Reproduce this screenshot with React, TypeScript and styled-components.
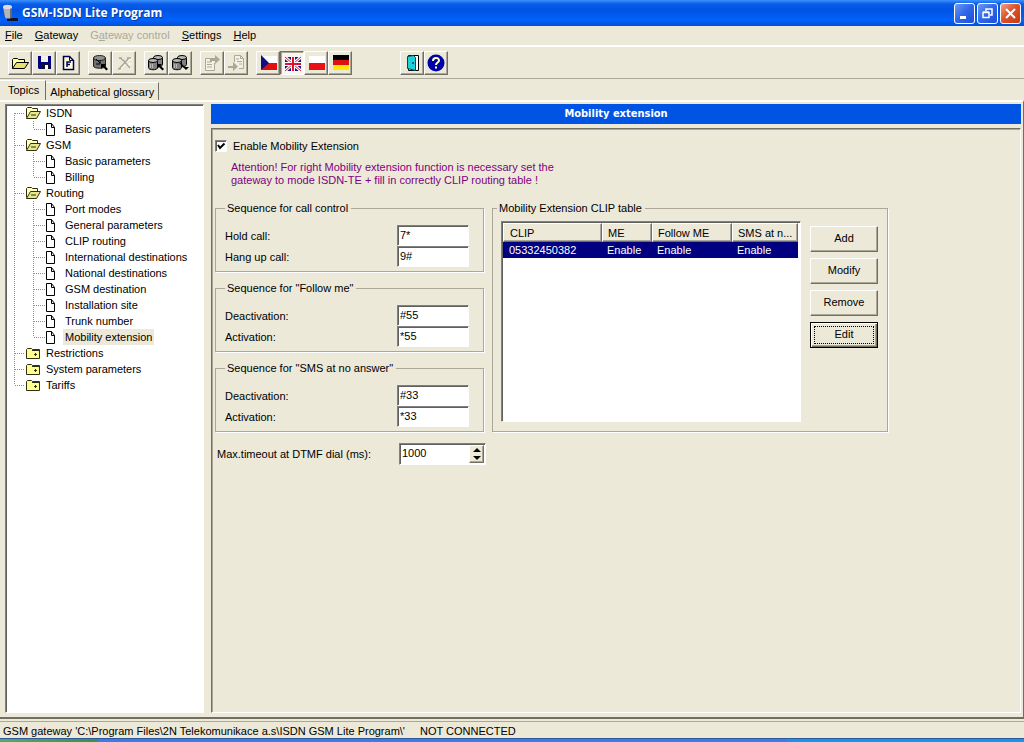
import React, { useState } from "react";
import styled, { createGlobalStyle, css } from "styled-components";

const face = "#ece9d8";
const shadow = "#aca899";
const dark = "#716f64";
const light = "#ffffff";
const sans = '"Liberation Sans", Arial, sans-serif';

const GlobalStyle = createGlobalStyle`
  * { box-sizing: border-box; }
  body { margin: 0; background: ${face}; color: #000; font: 11px/16px ${sans}; }
  button, input { font: inherit; color: inherit; }
  button { padding: 0; margin: 0; border: 0; background: none; }
  svg { display: block; flex: none; }
`;

const sunken = css`
  border: 1px solid;
  border-color: #808080 ${light} ${light} #808080;
  box-shadow: inset 1px 1px 0 #606060;
`;

const raised = css`
  border: 1px solid;
  border-color: ${light} ${dark} ${dark} ${light};
  box-shadow: inset -1px -1px 0 ${shadow};
`;

const Window = styled.div`
  display: flex;
  flex-direction: column;
  min-height: 100vh;
`;

const TitleBar = styled.header`
  display: flex;
  align-items: center;
  gap: 4px;
  height: 26px;
  padding: 0 3px 0 2px;
  background: linear-gradient(#3c94fc 0, #0a5be8 4px, #0054e3 10px, #0262fb 20px, #0150d8 26px);
`;

const Title = styled.h1`
  flex: 1;
  margin: 0;
  color: #fff;
  font: bold 12px/20px "Open Sans", "Noto Sans", sans-serif;
  text-shadow: 1px 1px 0 #0a3a9c;
`;

const Caption = styled.div`
  display: flex;
  gap: 2px;
`;

const CaptionButton = styled.button<{ $close?: boolean }>`
  display: grid;
  place-items: center;
  width: 21px;
  height: 21px;
  border: 1px solid #fff;
  border-radius: 3px;
  background: ${(p) =>
    p.$close
      ? "linear-gradient(135deg, #f0a088, #e0532a 45%, #c43a10)"
      : "linear-gradient(135deg, #6d9af4, #2f66e8 50%, #1c4fd8)"};
`;

const MenuBar = styled.nav`
  display: flex;
  gap: 12px;
  height: 21px;
  padding: 1px 5px 2px;
  border-bottom: 2px solid #fff;
`;

const MenuItem = styled.button`
  line-height: 16px;
  &:disabled { color: ${shadow}; }
`;

const Toolbar = styled.div`
  display: flex;
  gap: 8px;
  padding: 4px 8px 3px;
  border-bottom: 1px solid ${shadow};
`;

const ToolGroup = styled.div<{ $apart?: boolean }>`
  display: flex;
  margin-left: ${(p) => (p.$apart ? 40 : 0)}px;
`;

const ToolButton = styled.button<{ $pressed?: boolean }>`
  display: grid;
  place-items: center;
  width: 24px;
  height: 24px;
  ${raised}
  ${(p) =>
    p.$pressed &&
    css`
      border-color: ${dark} ${light} ${light} ${dark};
      box-shadow: inset 1px 1px 0 ${shadow};
      background: #f7f5ee;
    `}
`;

const Tabs = styled.div`
  display: flex;
  align-items: flex-end;
  height: 20px;
  margin-top: 1px;
`;

const Tab = styled.button<{ $active?: boolean }>`
  height: ${(p) => (p.$active ? 20 : 18)}px;
  padding: ${(p) => (p.$active ? "0 6px 1px 8px" : "0 4px")};
  border-right: 1px solid ${dark};
  border-top: 1px solid #fff;
`;

const Page = styled.main`
  flex: 1;
  display: flex;
  gap: 7px;
  padding: 2px 2px 4px 5px;
  border-top: 2px solid #fbfaf4;
  border-right: 1px solid ${dark};
  border-bottom: 2px solid ${dark};
`;

const Tree = styled.ul`
  flex: none;
  width: 199px;
  margin: 0;
  padding: 0;
  list-style: none;
  background: #fff;
  ${sunken}
`;

const TreeRow = styled.li`
  display: flex;
  height: 16px;
`;

const TreeLabel = styled.button<{ $selected?: boolean; $leaf?: boolean }>`
  height: 16px;
  padding: 0 2px;
  margin-left: ${(p) => (p.$leaf ? 6 : 2)}px;
  line-height: 16px;
  background: ${(p) => (p.$selected ? face : "none")};
`;

const Content = styled.section`
  flex: 1;
  min-width: 0;
  display: flex;
  flex-direction: column;
  gap: 4px;
`;

const Heading = styled.h2`
  margin: 0;
  background: #0054e3;
  color: #fff;
  text-align: center;
  font: bold 11px/20px "DejaVu Sans Condensed", "DejaVu Sans", sans-serif;
`;

const Panel = styled.div`
  flex: 1;
  padding: 8px 3px;
  border: 1px solid;
  border-color: ${dark} #fff #fff ${dark};
  box-shadow: inset 1px 1px 0 ${shadow};
`;

const CheckLabel = styled.label`
  display: flex;
  align-items: center;
  gap: 6px;
  height: 17px;
`;

const CheckBox = styled.span`
  display: grid;
  > * { grid-area: 1 / 1; }
  input {
    appearance: none;
    width: 12px;
    height: 12px;
    margin: 0;
    background: #fff;
    ${sunken}
  }
  svg { pointer-events: none; }
  input:not(:checked) + svg { visibility: hidden; }
`;

const Notice = styled.p`
  margin: 7px 0 13px 16px;
  color: #800080;
  line-height: 13px;
`;

const Columns = styled.div`
  display: flex;
  align-items: flex-start;
  gap: 8px;
`;

const Sequences = styled.div`
  display: flex;
  flex-direction: column;
  gap: 8px;
  width: 269px;
`;

const Group = styled.fieldset`
  min-width: 0;
  margin: 0;
  padding: 0 14px 4px 9px;
  border: 1px solid ${shadow};
  box-shadow: 1px 1px 0 #fff;
`;

const Legend = styled.legend`
  padding: 0 3px 0 2px;
  line-height: 16px;
`;

const Fields = styled.div`
  padding-top: 9px;
`;

const Field = styled.label`
  display: flex;
  align-items: center;
  justify-content: space-between;
  height: 21px;
`;

const TextBox = styled.input`
  width: 72px;
  height: 21px;
  padding: 0 2px 2px;
  outline: none;
  background: #fff;
  ${sunken}
`;

const TableGroup = styled(Group)`
  flex: none;
  width: 396px;
  padding: 5px 8px 9px 4px;
`;

const TableArea = styled.div`
  display: flex;
  gap: 9px;
  padding-left: 4px;
`;

const ListBox = styled.div`
  width: 300px;
  height: 201px;
  padding: 1px 2px 1px 1px;
  background: #fff;
  ${sunken}
`;

const Table = styled.table`
  width: 100%;
  table-layout: fixed;
  border-collapse: separate;
  border-spacing: 0;
  th {
    height: 19px;
    padding: 0 6px;
    background: ${face};
    text-align: left;
    font-weight: normal;
    white-space: nowrap;
    ${raised}
  }
  th + th { padding: 0 5px; }
  td {
    height: 16px;
    padding: 1px 5px 0;
    background: #000080;
    color: #fff;
    line-height: 15px;
  }
  td:first-child { padding-left: 6px; }
`;

const Actions = styled.div`
  display: flex;
  flex-direction: column;
  gap: 6px;
  padding-top: 5px;
`;

const ActionButton = styled.button<{ $default?: boolean }>`
  width: 68px;
  height: 26px;
  padding-bottom: 2px;
  ${raised}
  ${(p) =>
    p.$default &&
    css`
      border-color: #000;
      box-shadow: inset 1px 1px 0 #fff, inset -1px -1px 0 ${dark}, inset -2px -2px 0 ${shadow};
      outline: 1px dotted #000;
      outline-offset: -5px;
    `}
`;

const Timeout = styled.div`
  display: flex;
  align-items: center;
  justify-content: space-between;
  width: 271px;
  margin-top: 11px;
  padding-left: 2px;
`;

const Spinner = styled.div`
  display: flex;
  width: 87px;
  height: 22px;
  padding: 1px;
  background: #fff;
  ${sunken}
  input {
    flex: 1;
    min-width: 0;
    padding: 0 1px 2px;
    border: 0;
    outline: none;
    background: none;
    appearance: textfield;
  }
  input::-webkit-inner-spin-button { display: none; }
`;

const SpinButtons = styled.div`
  display: flex;
  flex-direction: column;
  width: 15px;
  background: ${face};
  ${raised}
  button { flex: 1; display: grid; place-items: center; min-height: 0; }
`;

const StatusBar = styled.footer`
  display: flex;
  gap: 15px;
  height: 17px;
  margin-top: 2px;
  padding: 1px 3px 0;
  border-top: 1px solid ${shadow};
  line-height: 16px;
  white-space: nowrap;
`;

const Taskbar = styled.div`
  display: flex;
  height: 4px;
  border-top: 1px solid #2a5a9c;
`;

const TaskPart = styled.div<{ $share: number; $color: string }>`
  flex: ${(p) => p.$share};
  background: ${(p) => p.$color};
`;

const Icon = ({ size = 18, children }: { size?: number; children: React.ReactNode }) => (
  <svg width={size} height={size} viewBox={`0 0 ${size} ${size}`} fill="none" aria-hidden="true">
    {children}
  </svg>
);

const Cylinder = ({ x, y }: { x: number; y: number }) => (
  <g transform={`translate(${x} ${y})`} stroke="#000">
    <path d="M.5 2.5v7c0 3 9 3 9 0v-7" fill="#808080" />
    <ellipse cx="5" cy="2.5" rx="4.5" ry="2" fill="#b8b8b8" />
    <path d="M2.500 6v4M4.500 6v4" stroke="#b8b8b8" />
  </g>
);

const icons = {
  open: (
    <Icon>
      <path d="M1.500 14.500v-9l1-1h4l1 1h6v3" fill="#ffffa0" stroke="#000" />
      <path d="M1.500 14.500l4-6h12l-4 6z" fill="#e8e070" stroke="#000" />
    </Icon>
  ),
  save: (
    <Icon>
      <path d="M3 2h13v13H4l-1-1z" fill="#000080" />
      <path d="M6 2h7v6H6z" fill="#f4f2e8" />
      <path d="M6 10h8v5H6z" fill="#101030" />
      <path d="M10 11h3v4h-3z" fill="#fff" />
    </Icon>
  ),
  report: (
    <Icon>
      <path d="M4.500 2.500h6l4 4v9h-10z" fill="#ffffd8" stroke="#000050" strokeWidth="1.500" />
      <path d="M10.500 2.500v4h4" stroke="#000050" />
      <path d="M8 13V8h4M8 10.500h3" stroke="#000050" strokeWidth="1.500" />
    </Icon>
  ),
  connect: (
    <Icon>
      <path d="M2.500 4v8c0 3 12 3 12 0V4" fill="#707070" stroke="#202020" />
      <ellipse cx="8.500" cy="4" rx="6" ry="2.500" fill="#909090" stroke="#202020" />
      <path d="M5 5l4 4M9 6v4H5" stroke="#000" />
      <path d="M10 10h5l-1.500 1.500 3.500 3.500-1.500 1.500-3.500-3.500L10 15z" fill="#000" />
    </Icon>
  ),
  cut: (
    <Icon>
      <path d="M4 15L14 4M4 4c5 1 7 6 11 10M4 4h3M12 4h4M3 15h3M12 9h4" stroke="#fff" transform="translate(1 1)" />
      <path d="M4 15L14 4M4 4c5 1 7 6 11 10M4 4h3M12 4h4M3 15h3" stroke={shadow} strokeWidth="1.500" />
    </Icon>
  ),
  read: (
    <Icon>
      <Cylinder x={6} y={1} />
      <Cylinder x={1} y={4} />
      <path d="M10 10h5l-1.500 1.500 3.500 3.500-1.500 1.500-3.500-3.500L10 15z" fill="#000" />
    </Icon>
  ),
  write: (
    <Icon>
      <Cylinder x={6} y={1} />
      <Cylinder x={1} y={4} />
      <path d="M9 9l4 4" stroke="#000" strokeWidth="1.500" />
      <path d="M12 13h6l-3 3z" fill="#000" />
    </Icon>
  ),
  exportDoc: (
    <Icon>
      <path d="M8 4.500H2.500v12h9V9" stroke={shadow} fill="#f4f1e4" />
      <path d="M4 8h4M4 10.500h5M4 13h5" stroke={shadow} />
      <path d="M7 8V4h5V1l5 4.500-5 4.500V7H9v1z" fill={shadow} />
    </Icon>
  ),
  importDoc: (
    <Icon>
      <path d="M7.500 8V1.500h6l3 3v10H12" stroke={shadow} fill="#f4f1e4" />
      <path d="M13.500 1.500v3h3M9 5h3M10 7.500h5M12 10h3" stroke={shadow} />
      <path d="M1 12h5V8l5 4.500L6 17v-3H1z" fill={shadow} />
    </Icon>
  ),
  czech: (
    <Icon>
      <path d="M2 2h16v7H2z" fill="#fff" />
      <path d="M2 9h16v7H2z" fill="#e01010" />
      <path d="M2 1l8 8-8 7z" fill="#101080" />
    </Icon>
  ),
  british: (
    <Icon>
      <path d="M2 3h16v14H2z" fill="#181878" />
      <path d="M2 3l16 14M18 3L2 17" stroke="#fff" strokeWidth="3" />
      <path d="M2 3l16 14M18 3L2 17" stroke="#e01030" />
      <path d="M10 3v14M2 10h16" stroke="#fff" strokeWidth="4" />
      <path d="M10 3v14M2 10h16" stroke="#e01030" strokeWidth="2" />
    </Icon>
  ),
  polish: (
    <Icon>
      <path d="M2 2h16v7H2z" fill="#fff" />
      <path d="M2 9h16v7H2z" fill="#e81010" />
    </Icon>
  ),
  german: (
    <Icon>
      <path d="M2 1h16v5H2z" fill="#000" />
      <path d="M2 6h16v5H2z" fill="#e01010" />
      <path d="M2 11h16v5H2z" fill="#ffe800" />
    </Icon>
  ),
  exit: (
    <Icon>
      <path d="M5.500 1.500h10v15h-10z" fill="#fff" stroke="#000" />
      <path d="M4.500 2.500l6-1 2 2v13l-8-2z" fill="#20d0d8" stroke="#004850" />
      <path d="M10 8v2" stroke="#000" />
    </Icon>
  ),
  help: (
    <Icon>
      <circle cx="9" cy="9" r="8.500" fill="#0000a8" />
      <path d="M6 7c0-4 6-4 6-.5 0 2-3 2-3 4.500M9 12.500v2" stroke="#ffffd0" strokeWidth="2" />
    </Icon>
  ),
};

type Tool = { icon: keyof typeof icons; label: string; disabled?: boolean; pressed?: boolean };

const toolGroups: Tool[][] = [
  [
    { icon: "open", label: "Open" },
    { icon: "save", label: "Save" },
    { icon: "report", label: "Report" },
  ],
  [
    { icon: "connect", label: "Connect" },
    { icon: "cut", label: "Disconnect", disabled: true },
  ],
  [
    { icon: "read", label: "Read from gateway" },
    { icon: "write", label: "Write to gateway" },
  ],
  [
    { icon: "exportDoc", label: "Export", disabled: true },
    { icon: "importDoc", label: "Import", disabled: true },
  ],
  [
    { icon: "czech", label: "Czech" },
    { icon: "british", label: "English", pressed: true },
    { icon: "polish", label: "Polish" },
    { icon: "german", label: "German" },
  ],
  [
    { icon: "exit", label: "Exit" },
    { icon: "help", label: "Help topics" },
  ],
];

const menus = ["File", "Gateway", "Gateway control", "Settings", "Help"];
const mnemonic: Record<string, number> = { "Gateway control": 1 };

type Folder = { name: string; children: string[] };

const folders: Folder[] = [
  { name: "ISDN", children: ["Basic parameters"] },
  { name: "GSM", children: ["Basic parameters", "Billing"] },
  {
    name: "Routing",
    children: [
      "Port modes",
      "General parameters",
      "CLIP routing",
      "International destinations",
      "National destinations",
      "GSM destination",
      "Installation site",
      "Trunk number",
      "Mobility extension",
    ],
  },
  { name: "Restrictions", children: [] },
  { name: "System parameters", children: [] },
  { name: "Tariffs", children: [] },
];

const dots = { stroke: "#909090", strokeDasharray: "1 1" };

const FolderMark = ({ open, first, last }: { open: boolean; first: boolean; last: boolean }) => (
  <svg width="36" height="16" fill="none" aria-hidden="true">
    <path d={`M8.500 ${first ? 8 : 0}V${last ? 8 : 16}M9 8.500h10`} {...dots} />
    {open ? (
      <>
        <path d="M20.500 12.500v-9l1-1h4l1 1h5v3" fill="#ffffc0" stroke="#303010" />
        <path d="M20.500 13.500l4-7h10l-4 7z" fill="#e8e890" stroke="#303010" />
        <path d="M25 10h5" stroke="#303010" />
      </>
    ) : (
      <>
        <path d="M20.500 13.500v-9l1-1h4l1 1h7v9z" fill="#ffff90" stroke="#303010" />
        <path d="M26 5.500h7" stroke="#303010" />
        <path d="M29.500 8v3M28 9.500h3" stroke="#303010" />
      </>
    )}
  </svg>
);

const LeafMark = ({ last }: { last: boolean }) => (
  <svg width="51" height="16" fill="none" aria-hidden="true">
    <path d={`M8.500 0V16M27.500 0V${last ? 8 : 16}M28 8.500h11`} {...dots} />
    <path d="M40.500 2.500h5l3 4v8h-8z" fill="#fff" stroke="#000" />
    <path d="M45.500 2.500v4h3" stroke="#000" />
  </svg>
);

const sequences = [
  { title: "Sequence for call control", fields: [["Hold call:", "7*"], ["Hang up call:", "9#"]] },
  { title: 'Sequence for "Follow me"', fields: [["Deactivation:", "#55"], ["Activation:", "*55"]] },
  { title: 'Sequence for "SMS at no answer"', fields: [["Deactivation:", "#33"], ["Activation:", "*33"]] },
];

const clipColumns = ["CLIP", "ME", "Follow ME", "SMS at n..."];
const clipRows = [["05332450382", "Enable", "Enable", "Enable"]];

export default function App() {
  const [selected, setSelected] = useState("Mobility extension");
  const [timeout, setTimeoutMs] = useState(1000);

  return (
    <Window>
      <GlobalStyle />
      <TitleBar>
        <svg width="16" height="18" aria-hidden="true">
          <path d="M5 14h11v3H5z" fill="#10102c" />
          <path d="M1 3c0-3 9-3 9 0v10c0 2-7 2-7 0z" fill="#b4b4b4" />
          <path d="M8 2l2 1v11H8z" fill="#686868" />
          <ellipse cx="5.500" cy="3" rx="4.500" ry="2" fill="#dcdcdc" />
        </svg>
        <Title>GSM-ISDN Lite Program</Title>
        <Caption>
          <CaptionButton aria-label="Minimize">
            <Icon size={13}>
              <path d="M2 10.500h6" stroke="#fff" strokeWidth="3" />
            </Icon>
          </CaptionButton>
          <CaptionButton aria-label="Restore">
            <Icon size={13}>
              <path d="M5 4V2h6v6H9" stroke="#fff" strokeWidth="1.500" />
              <path d="M2 5.500h6v5H2zM2 5h6" stroke="#fff" strokeWidth="1.500" />
            </Icon>
          </CaptionButton>
          <CaptionButton $close aria-label="Close">
            <Icon size={13}>
              <path d="M2 2l9 9M11 2l-9 9" stroke="#fff" strokeWidth="2" />
            </Icon>
          </CaptionButton>
        </Caption>
      </TitleBar>

      <MenuBar>
        {menus.map((name) => {
          const at = mnemonic[name] ?? 0;
          return (
            <MenuItem key={name} disabled={name === "Gateway control"}>
              {name.slice(0, at)}
              <u>{name[at]}</u>
              {name.slice(at + 1)}
            </MenuItem>
          );
        })}
      </MenuBar>

      <Toolbar>
        {toolGroups.map((group, i) => (
          <ToolGroup key={i} $apart={i === toolGroups.length - 1}>
            {group.map((tool) => (
              <ToolButton key={tool.icon} aria-label={tool.label} disabled={tool.disabled} $pressed={tool.pressed}>
                {icons[tool.icon]}
              </ToolButton>
            ))}
          </ToolGroup>
        ))}
      </Toolbar>

      <Tabs role="tablist">
        <Tab role="tab" aria-selected $active>Topics</Tab>
        <Tab role="tab">Alphabetical glossary</Tab>
      </Tabs>

      <Page>
        <Tree>
          {folders.map((folder, i) => (
            <React.Fragment key={folder.name}>
              <TreeRow>
                <FolderMark open={folder.children.length > 0} first={i === 0} last={i === folders.length - 1} />
                <TreeLabel>{folder.name}</TreeLabel>
              </TreeRow>
              {folder.children.map((child, j) => (
                <TreeRow key={child}>
                  <LeafMark last={j === folder.children.length - 1} />
                  <TreeLabel $leaf $selected={child === selected} onClick={() => setSelected(child)}>
                    {child}
                  </TreeLabel>
                </TreeRow>
              ))}
            </React.Fragment>
          ))}
        </Tree>

        <Content>
          <Heading>Mobility extension</Heading>
          <Panel>
            <CheckLabel>
              <CheckBox>
                <input type="checkbox" defaultChecked />
                <svg width="12" height="12" fill="none" aria-hidden="true">
                  <path d="M3 5l2 3 4.500-4.500" stroke="#000" strokeWidth="2" />
                </svg>
              </CheckBox>
              Enable Mobility Extension
            </CheckLabel>
            <Notice>
              Attention! For right Mobility extension function is necessary set the
              <br />
              gateway to mode ISDN-TE + fill in correctly CLIP routing table !
            </Notice>

            <Columns>
              <Sequences>
                {sequences.map((seq) => (
                  <Group key={seq.title}>
                    <Legend>{seq.title}</Legend>
                    <Fields>
                      {seq.fields.map(([label, value]) => (
                        <Field key={label}>
                          {label}
                          <TextBox type="text" defaultValue={value} />
                        </Field>
                      ))}
                    </Fields>
                  </Group>
                ))}
              </Sequences>

              <TableGroup>
                <Legend>Mobility Extension CLIP table</Legend>
                <TableArea>
                  <ListBox>
                    <Table>
                      <colgroup>
                        <col width="99" />
                        <col width="50" />
                        <col width="80" />
                        <col width="66" />
                      </colgroup>
                      <thead>
                        <tr>{clipColumns.map((name) => <th key={name}>{name}</th>)}</tr>
                      </thead>
                      <tbody>
                        {clipRows.map((row) => (
                          <tr key={row[0]}>{row.map((cell, i) => <td key={i}>{cell}</td>)}</tr>
                        ))}
                      </tbody>
                    </Table>
                  </ListBox>
                  <Actions>
                    <ActionButton>Add</ActionButton>
                    <ActionButton>Modify</ActionButton>
                    <ActionButton>Remove</ActionButton>
                    <ActionButton $default>Edit</ActionButton>
                  </Actions>
                </TableArea>
              </TableGroup>
            </Columns>

            <Timeout>
              <label htmlFor="dtmf-timeout">Max.timeout at DTMF dial (ms):</label>
              <Spinner>
                <input
                  id="dtmf-timeout"
                  type="number"
                  value={timeout}
                  onChange={(e) => setTimeoutMs(Number(e.target.value))}
                />
                <SpinButtons>
                  <button aria-label="Increase" onClick={() => setTimeoutMs(timeout + 100)}>
                    <svg width="8" height="4" aria-hidden="true"><path d="M4 0l4 4H0z" /></svg>
                  </button>
                  <button aria-label="Decrease" onClick={() => setTimeoutMs(timeout - 100)}>
                    <svg width="8" height="4" aria-hidden="true"><path d="M0 0h8L4 4z" /></svg>
                  </button>
                </SpinButtons>
              </Spinner>
            </Timeout>
          </Panel>
        </Content>
      </Page>

      <StatusBar>
        <span>GSM gateway 'C:\Program Files\2N Telekomunikace a.s\ISDN GSM Lite Program\'</span>
        <span>NOT CONNECTED</span>
      </StatusBar>
      <Taskbar>
        <TaskPart $share={98} $color="linear-gradient(90deg, #58a868, #3c9048)" />
        <TaskPart $share={689} $color="#3f7ae8" />
        <TaskPart $share={237} $color="#1694ee" />
      </Taskbar>
    </Window>
  );
}
